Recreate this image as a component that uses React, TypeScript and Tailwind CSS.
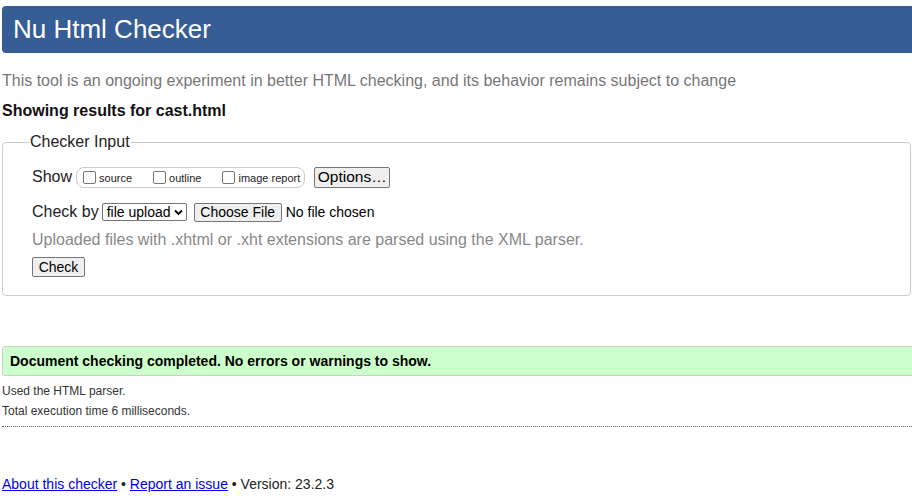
// Nu Html Checker results page

function Checkbox({ label, last }: { label: string; last?: boolean }) {
  return (
    <label className={`flex items-center ${last ? '' : 'mr-[21px]'}`}>
      <span className="w-[13px] h-[13px] border border-[#767676] rounded-[2px] bg-white mr-[3px] shrink-0" />
      <span className="text-[11px] leading-[13px] pt-[2px]">{label}</span>
    </label>
  )
}

function NativeButton({ children, className = '' }: { children: React.ReactNode; className?: string }) {
  return (
    <span
      className={`inline-flex items-center justify-center bg-[#efefef] border border-[#767676] rounded-[2px] text-black ${className}`}
    >
      {children}
    </span>
  )
}

export default function App() {
  return (
    <div className="w-[912px] h-[502px] overflow-hidden bg-white text-[#222] font-['Liberation_Sans',Arial,sans-serif]">
      <div className="w-[960px] pl-[2px]">
        {/* Header */}
        <div className="mt-[6px] h-[47px] bg-[#365d95] rounded-l-[4px] pl-[11px] text-white text-[26px] leading-[46px]">
          Nu Html Checker
        </div>

        <p className="mt-[18px] text-[16px] leading-[20px] text-[#777]">
          This tool is an ongoing experiment in better HTML checking, and its behavior remains subject to change
        </p>
        <p className="mt-[10px] text-[16px] leading-[20px] font-bold text-[#111]">Showing results for cast.html</p>

        {/* Checker input */}
        <fieldset className="mt-[12px] w-[909px] border border-[#ccc] rounded-[4px] pl-[29px] pb-[18px]">
          <legend className="-ml-[3px] px-[1px] text-[16px] leading-[18px] text-[#222]">Checker Input</legend>

          <div className="mt-[15px] flex items-center h-[22px]">
            <span className="text-[16px] text-[#222]">Show</span>
            <span className="ml-[4px] flex items-center h-[21px] border border-[#ccc] rounded-[8px] pl-[6px] pr-[4px] text-[#222]">
              <Checkbox label="source" />
              <Checkbox label="outline" />
              <Checkbox label="image report" last />
            </span>
            <NativeButton className="ml-[9px] w-[76px] h-[21px] text-[15.5px] leading-[18px] text-[#111]">Options…</NativeButton>
          </div>

          <div className="mt-[14px] flex items-center h-[20px]">
            <span className="text-[16px] text-[#222]">Check by</span>
            <span className="ml-[3px] flex items-center w-[85px] h-[18px] border border-[#767676] rounded-[2px] bg-white pl-[4px] text-[14px] text-black">
              file upload
              <svg className="ml-[3px]" width="9" height="7" viewBox="0 0 9 7" fill="none">
                <path d="M1 1.5 L4.5 5 L8 1.5" stroke="#000" strokeWidth="1.8" />
              </svg>
            </span>
            <NativeButton className="ml-[7px] w-[88px] h-[19px] text-[14px]">Choose File</NativeButton>
            <span className="ml-[4px] text-[14px] text-black">No file chosen</span>
          </div>

          <p className="mt-[8px] text-[16px] leading-[20px] text-[#888]">
            Uploaded files with .xhtml or .xht extensions are parsed using the XML parser.
          </p>

          <div className="mt-[7px] flex">
            <NativeButton className="w-[53px] h-[20px] text-[14px]">Check</NativeButton>
          </div>
        </fieldset>

        {/* Result */}
        <div className="mt-[50px] h-[30px] border border-[#ccc] rounded-l-[3px] bg-[#ccffcc] pl-[7px] flex items-center text-[14px] font-bold text-black">
          Document checking completed. No errors or warnings to show.
        </div>
        <p className="mt-[5px] text-[12px] leading-[20px] text-[#333]">Used the HTML parser.</p>
        <p className="text-[12px] leading-[20px] text-[#333]">Total execution time 6 milliseconds.</p>
        <div className="mt-[5px] border-t border-dotted border-[#666]" />

        {/* Footer */}
        <p className="mt-[47px] text-[14px] leading-[20px] text-[#222]">
          <a href="#" className="text-[#0000ee] underline">About this checker</a>
          {' • '}
          <a href="#" className="text-[#0000ee] underline">Report an issue</a>
          {' • Version: 23.2.3'}
        </p>
      </div>
    </div>
  )
}
